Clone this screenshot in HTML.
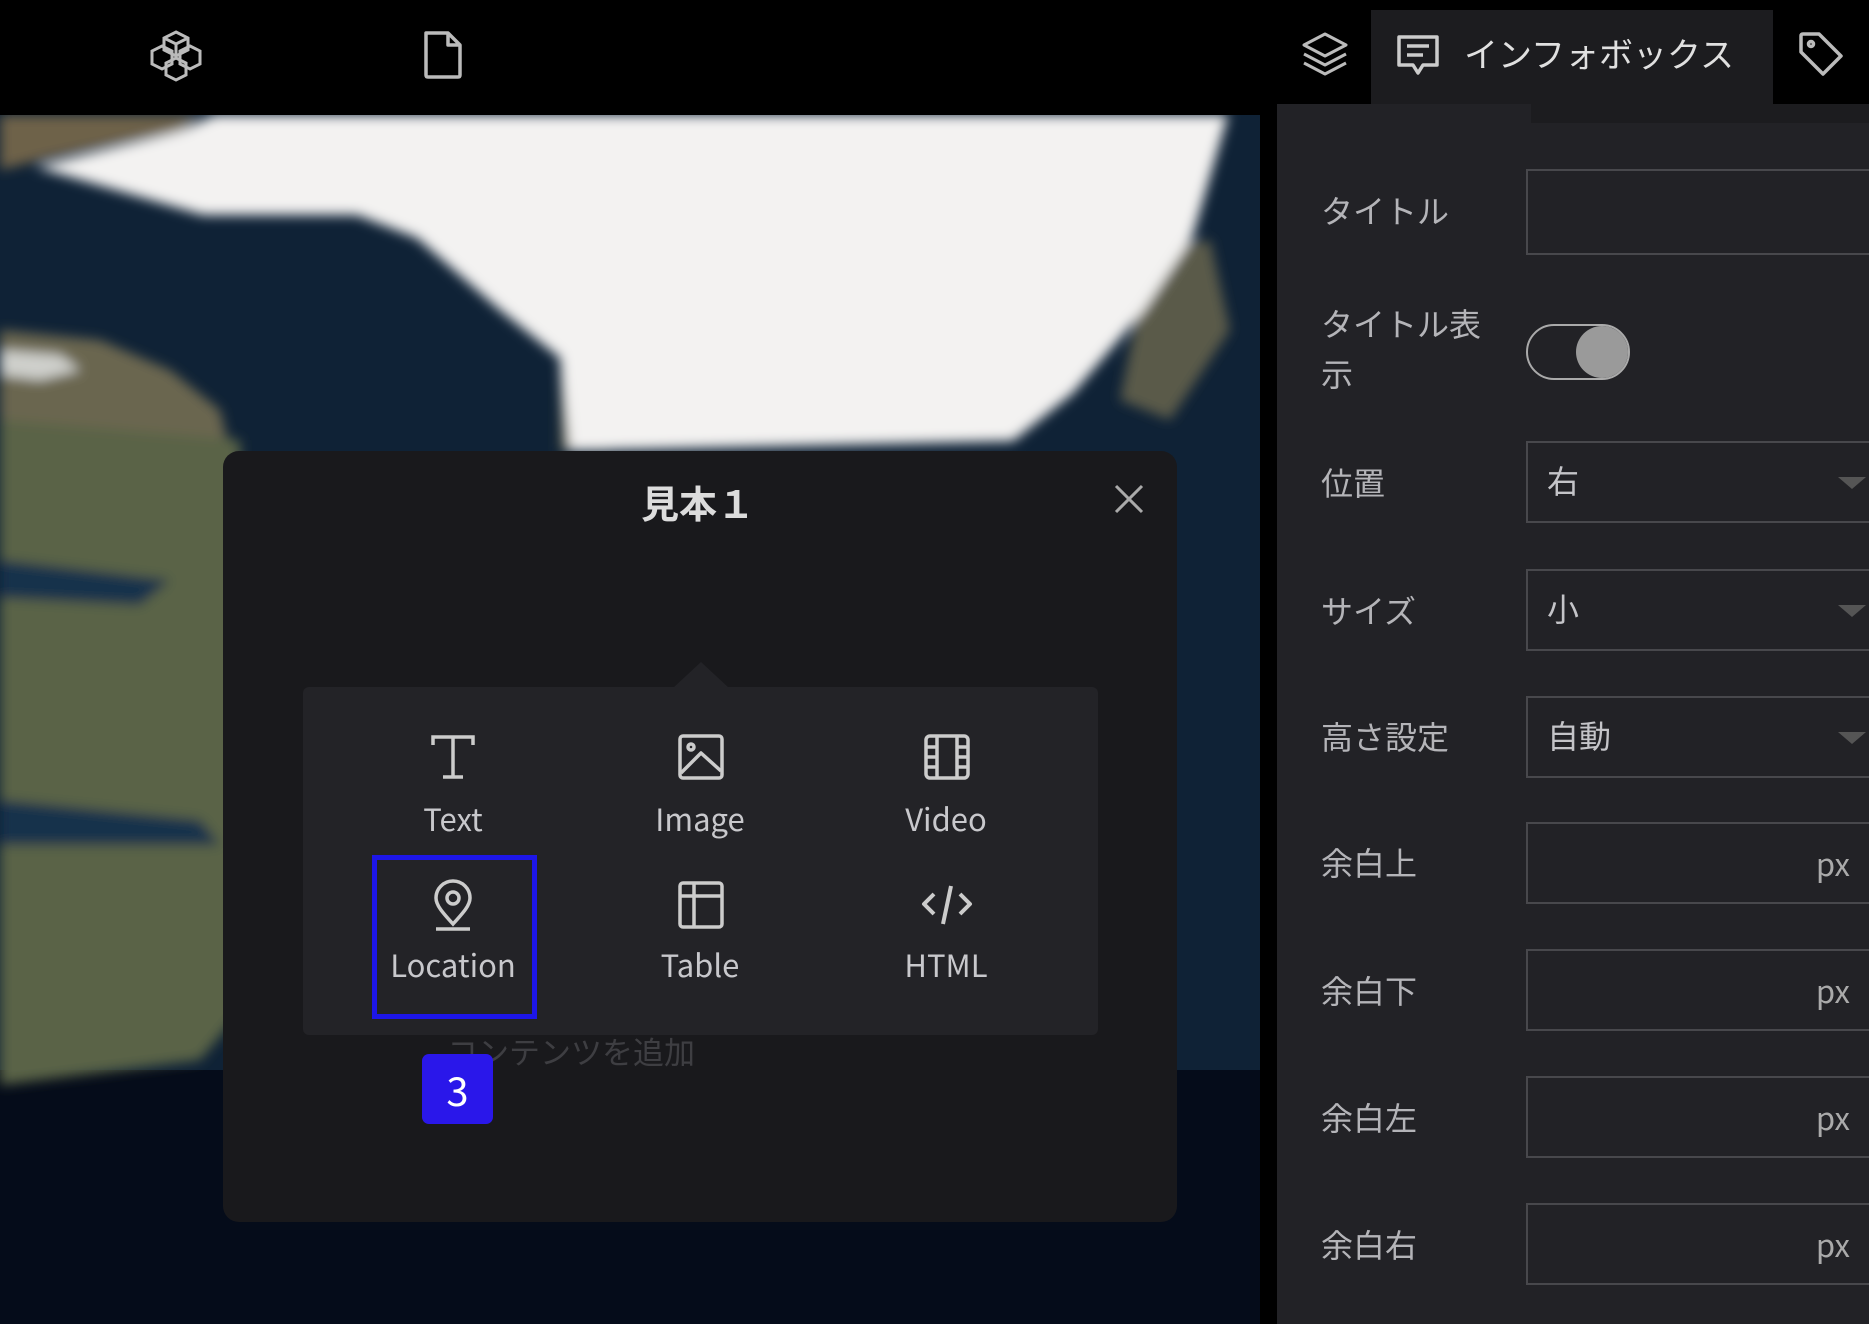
<!DOCTYPE html>
<html><head><meta charset="utf-8"><style>
*{margin:0;padding:0;box-sizing:border-box}
body{width:1869px;height:1324px;background:#000;position:relative;overflow:hidden;font-family:"Noto Sans CJK JP","Liberation Sans",sans-serif}
.abs{position:absolute}
.lbl{position:absolute;left:1321px;color:#b4b4b8;font-size:32px;line-height:48px}
.inp{position:absolute;left:1526px;width:360px;border:2px solid #48484c;height:82px;color:#c4c4c8;font-size:32px}
.px{position:absolute;right:34px;top:16px;color:#aaa;font-size:31px}
.arr{position:absolute;right:18px;top:34px;width:0;height:0;border-left:14px solid transparent;border-right:14px solid transparent;border-top:12px solid #555}
.item{position:absolute;width:200px;text-align:center;color:#c8c8cc;font-size:31px;line-height:44px}
</style></head><body>
<svg class="abs" style="left:0;top:115px" width="1260" height="1209" viewBox="0 115 1260 1209">
<defs><filter id="b"><feGaussianBlur stdDeviation="6"/></filter></defs>
<rect x="0" y="115" width="1260" height="1209" fill="#0f2236"/>
<rect x="0" y="1070" width="1260" height="254" fill="#050c1a"/>
<g filter="url(#b)">
<path d="M0 330 L100 340 L170 370 L220 410 L230 450 L0 450Z" fill="#6a6650"/>
<path d="M0 350 L60 355 L80 370 L40 380 L0 375Z" fill="#cfd0cc"/>
<path d="M0 420 L240 440 L250 1000 L200 1060 L0 1085Z" fill="#5a6346"/>
<path d="M0 560 L170 580 L140 605 L0 598Z" fill="#17324c"/>
<path d="M0 800 L200 820 L220 845 L0 845Z" fill="#17324c"/>
<path d="M0 115 H200 L180 130 L40 160 L0 170Z" fill="#6e624a"/>
<path d="M560 330 L600 420 L610 451 L560 451Z" fill="#5e5e48"/>
<path d="M1150 250 L1210 240 L1230 330 L1170 420 L1120 400Z" fill="#5a5a4a"/>
<path d="M215 115 L1228 115 L1192 238 L1144 310 L1073 393 L1013 441 L570 451 L560 358 L500 310 L417 238 L357 215 L203 215 L36 167 L179 131Z" fill="#f3f2f1"/>
</g>
</svg>
<svg class="abs" style="left:148px;top:28px" width="56" height="54" viewBox="0 0 56 54" fill="none" stroke="#bbb" stroke-width="3"><path d="M28 4 L40 10 V22 L28 28 L16 22 V10Z M16 10 L28 16 L40 10 M28 16 V28"/><path d="M14 18 L24 23 V36 L14 41 L4 36 V23Z"/><path d="M42 18 L52 23 V36 L42 41 L32 36 V23Z"/><path d="M28 30 L38 35 V47 L28 52 L18 47 V35Z"/></svg>
<svg class="abs" style="left:421px;top:30px" width="44" height="50" viewBox="0 0 44 50" fill="none" stroke="#bbb" stroke-width="3.5" stroke-linejoin="round"><path d="M5 3 H27 L39 15 V45 Q39 47 37 47 H7 Q5 47 5 45Z M27 3 V15 H39"/></svg>
<svg class="abs" style="left:1300px;top:30px" width="50" height="50" viewBox="0 0 50 50" fill="none" stroke="#bbb" stroke-width="3" stroke-linejoin="round"><path d="M25 4 L46 15 L25 26 L4 15Z M4 24 L25 35 L46 24 M4 33 L25 44 L46 33"/></svg>
<div class="abs" style="left:1371px;top:10px;width:402px;height:100px;background:#1c1c1f"></div>
<div class="abs" style="left:1277px;top:104px;width:592px;height:1220px;background:#222226"></div>
<div class="abs" style="left:1531px;top:104px;width:338px;height:19px;background:#1c1c1f"></div>
<svg class="abs" style="left:1395px;top:33px" width="46" height="48" viewBox="0 0 46 48" fill="none" stroke="#ccc" stroke-width="3.5" stroke-linejoin="round"><path d="M4 4 H42 V32 H28 L23 40 L18 32 H4Z M12 13 H34 M12 22 H28"/></svg>
<div class="abs" style="left:1464px;top:28px;color:#e0e0e0;font-size:34px;line-height:50px">インフォボックス</div>
<svg class="abs" style="left:1797px;top:30px" width="48" height="48" viewBox="0 0 48 48" fill="none" stroke="#bbb" stroke-width="3.5" stroke-linejoin="round"><path d="M4 6 Q4 4 6 4 H22 L44 26 L26 44 L4 22Z"/><circle cx="14" cy="14" r="2.5"/></svg>
<div class="lbl" style="top:186px">タイトル</div>
<div class="inp" style="top:169px;height:86px"></div>
<div class="lbl" style="top:298px;line-height:50px">タイトル表<br>示</div>
<div class="abs" style="left:1526px;top:324px;width:104px;height:56px;border:2px solid #aaa;border-radius:28px"></div>
<div class="abs" style="left:1576px;top:326px;width:52px;height:52px;background:#9a9a9a;border-radius:50%"></div>
<div class="lbl" style="top:458px">位置</div><div class="inp" style="top:441px"><span class="abs" style="left:19px;top:14px">右</span><div class="arr"></div></div>
<div class="lbl" style="top:586px">サイズ</div><div class="inp" style="top:569px"><span class="abs" style="left:19px;top:14px">小</span><div class="arr"></div></div>
<div class="lbl" style="top:712px">高さ設定</div><div class="inp" style="top:696px"><span class="abs" style="left:19px;top:14px">自動</span><div class="arr"></div></div>
<div class="lbl" style="top:838px">余白上</div><div class="inp" style="top:822px"><span class="px">px</span></div>
<div class="lbl" style="top:966px">余白下</div><div class="inp" style="top:949px"><span class="px">px</span></div>
<div class="lbl" style="top:1093px">余白左</div><div class="inp" style="top:1076px"><span class="px">px</span></div>
<div class="lbl" style="top:1220px">余白右</div><div class="inp" style="top:1203px"><span class="px">px</span></div>
<div class="abs" style="left:223px;top:451px;width:954px;height:771px;background:#19191c;border-radius:16px"></div>
<div class="abs" style="left:523px;top:474px;width:350px;text-align:center;color:#dcdcdc;font-size:38px;font-weight:bold;line-height:56px">見本１</div>
<svg class="abs" style="left:1113px;top:483px" width="32" height="32" viewBox="0 0 32 32" stroke="#aaa" stroke-width="3"><path d="M3 3 L29 29 M29 3 L3 29"/></svg>
<div class="abs" style="left:303px;top:687px;width:795px;height:348px;background:#232327;border-radius:6px"></div>
<div class="abs" style="left:673px;top:662px;width:0;height:0;border-left:28px solid transparent;border-right:28px solid transparent;border-bottom:26px solid #232327"></div>
<svg class="abs" style="left:430px;top:733px" width="46" height="48" viewBox="0 0 46 48" fill="none" stroke="#ccc" stroke-width="3.5"><path d="M3 12 V4 H43 V12 M23 4 V44 M13 44 H33"/></svg>
<div class="item" style="left:353px;top:796px">Text</div>
<svg class="abs" style="left:677px;top:733px" width="48" height="48" viewBox="0 0 48 48" fill="none" stroke="#ccc" stroke-width="3.5" stroke-linejoin="round"><rect x="3" y="3" width="42" height="42" rx="3"/><circle cx="14" cy="14" r="3"/><path d="M4 40 L24 20 L44 38"/></svg>
<div class="item" style="left:600px;top:796px">Image</div>
<svg class="abs" style="left:923px;top:733px" width="48" height="48" viewBox="0 0 48 48" fill="none" stroke="#ccc" stroke-width="3.5" stroke-linejoin="round"><rect x="3" y="3" width="42" height="42" rx="4"/><path d="M14 3 V45 M34 3 V45 M3 14 H14 M3 24 H14 M3 34 H14 M34 14 H45 M34 24 H45 M34 34 H45"/></svg>
<div class="item" style="left:846px;top:796px">Video</div>
<svg class="abs" style="left:430px;top:878px" width="46" height="54" viewBox="0 0 46 54" fill="none" stroke="#ccc" stroke-width="3.5"><path d="M23 46 C12 34 6 27 6 20 A17 17 0 0 1 40 20 C40 27 34 34 23 46Z"/><circle cx="23" cy="20" r="6"/><path d="M6 51 H40"/></svg>
<div class="item" style="left:353px;top:942px">Location</div>
<svg class="abs" style="left:677px;top:880px" width="48" height="50" viewBox="0 0 48 50" fill="none" stroke="#ccc" stroke-width="3.5" stroke-linejoin="round"><rect x="3" y="3" width="42" height="44" rx="3"/><path d="M3 16 H45 M17 3 V47"/></svg>
<div class="item" style="left:600px;top:942px">Table</div>
<svg class="abs" style="left:920px;top:882px" width="54" height="46" viewBox="0 0 54 46" fill="none" stroke="#ccc" stroke-width="4" stroke-linejoin="round"><path d="M14 12 L4 22 L14 32 M40 12 L50 22 L40 32 M31 4 L23 42"/></svg>
<div class="item" style="left:846px;top:942px">HTML</div>
<div class="abs" style="left:372px;top:855px;width:165px;height:164px;border:5px solid #1d16e8"></div>
<div class="abs" style="left:447px;top:1029px;color:#3e3e42;font-size:31px;line-height:44px">コンテンツを追加</div>
<div class="abs" style="left:422px;top:1054px;width:71px;height:70px;background:#2a17ea;border-radius:7px;color:#fff;font-size:40px;text-align:center;line-height:70px">3</div>
</body></html>
